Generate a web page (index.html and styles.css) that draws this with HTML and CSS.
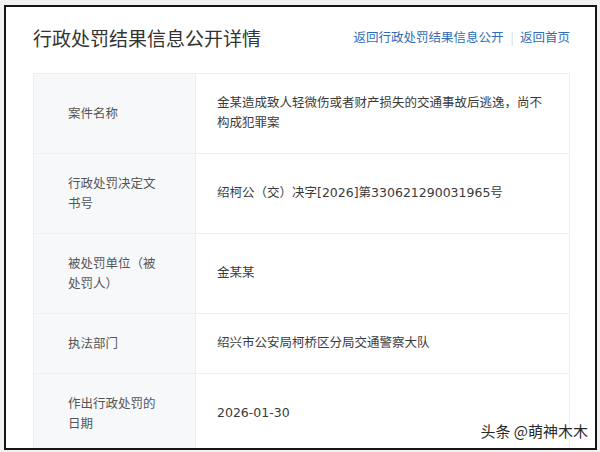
FILE: index.html
```html
<!DOCTYPE html>
<html lang="zh-CN">
<head>
<meta charset="utf-8">
<title>行政处罚结果信息公开详情</title>
<link rel="stylesheet" href="styles.css">
</head>
<body>
<div class="frame">
  <div class="header">
    <h1 class="title">行政处罚结果信息公开详情</h1>
    <div class="links">
      <a class="link" href="#">返回行政处罚结果信息公开</a>
      <span class="sep">|</span>
      <a class="link" href="#">返回首页</a>
    </div>
  </div>
  <div class="table">
    <div class="row">
      <div class="label">案件名称</div>
      <div class="value">金某造成致人轻微伤或者财产损失的交通事故后逃逸，尚不构成犯罪案</div>
    </div>
    <div class="row">
      <div class="label">行政处罚决定文书号</div>
      <div class="value">绍柯公（交）决字[2026]第330621290031965号</div>
    </div>
    <div class="row">
      <div class="label">被处罚单位（被处罚人）</div>
      <div class="value">金某某</div>
    </div>
    <div class="row">
      <div class="label">执法部门</div>
      <div class="value">绍兴市公安局柯桥区分局交通警察大队</div>
    </div>
    <div class="row">
      <div class="label">作出行政处罚的日期</div>
      <div class="value">2026-01-30</div>
    </div>
  </div>
  <div class="watermark">头条 @萌神木木</div>
</div>
</body>
</html>
```
FILE: styles.css
```css
html, body {
  margin: 0;
  padding: 0;
}
body {
  background: #f1f1f1;
  font-family: "Noto Sans CJK SC", "Noto Sans", sans-serif;
  width: 600px;
  height: 452px;
  overflow: hidden;
}
.frame {
  position: relative;
  margin: 5px 3px 0 4px;
  height: 441px;
  border: 2px solid #151515;
  background: #fff;
  overflow: hidden;
  padding: 0 25px 0 27px;
}
.header {
  display: flex;
  justify-content: space-between;
  align-items: flex-start;
  padding-top: 19px;
  height: 47px;
}
.title {
  margin: 0;
  font-size: 19px;
  line-height: 24px;
  font-weight: normal;
  color: #333;
}
.links {
  margin-top: 3px;
  display: flex;
  align-items: center;
  font-size: 12.5px;
  line-height: 16px;
}
.link {
  color: #2f6db5;
  text-decoration: none;
}
.sep {
  color: #d6d6d6;
  margin: 0 6px 0 7px;
}
.table {
  border: 1px solid #eeeeee;
  border-bottom: none;
}
.row {
  display: grid;
  grid-template-columns: 162px 1fr;
  border-bottom: 1px solid #efefef;
}
.label {
  background: #f7f8fa;
  border-right: 1px solid #eeeeee;
  padding: 19px 34px 20px;
  font-size: 12.5px;
  line-height: 20px;
  color: #555;
  display: flex;
  align-items: center;
}
.value {
  padding: 19px 22px 20px 21px;
  font-family: "DejaVu Sans", "Noto Sans CJK SC", sans-serif;
  font-size: 12.5px;
  line-height: 20px;
  color: #3a3a3a;
  display: flex;
  align-items: center;
}
.watermark {
  position: absolute;
  right: 7px;
  bottom: 7px;
  font-size: 15px;
  line-height: 20px;
  color: #2a2a2a;
  text-shadow: 0 0 2px #fff, 0 0 2px #fff;
}
```
